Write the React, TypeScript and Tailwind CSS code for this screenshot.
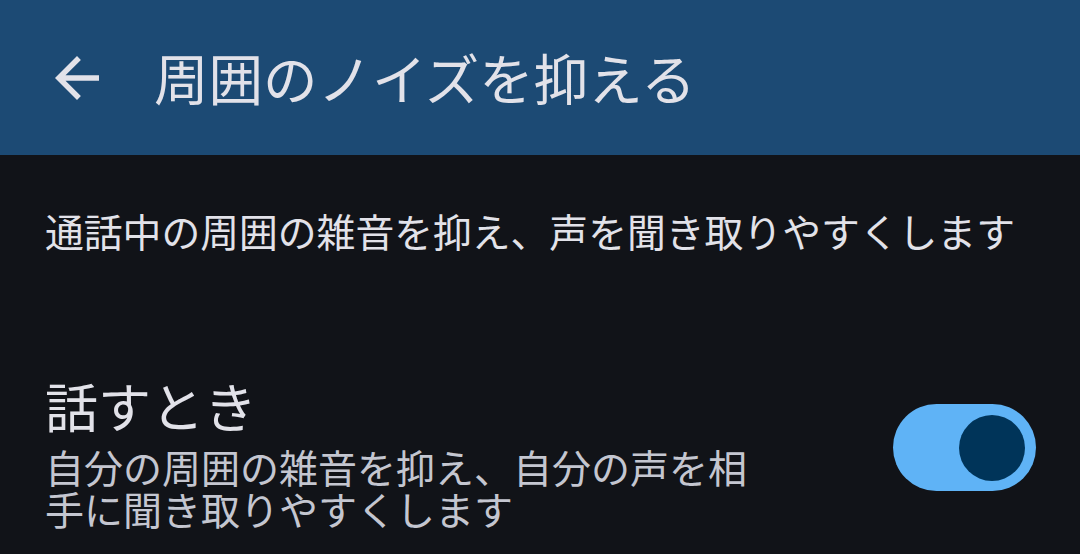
import React, { useState } from "react";

const ArrowBack = () => (
  <svg width="66" height="66" viewBox="0 0 24 24" fill="#e2e2e9">
    <path d="M20 11H7.83l5.59-5.59L12 4l-8 8 8 8 1.41-1.41L7.83 13H20v-2z" />
  </svg>
);

const Toggle = ({ on, onChange }: { on: boolean; onChange: () => void }) => (
  <button
    onClick={onChange}
    className={[
      "w-[143px] h-[87px] rounded-full flex items-center shrink-0 px-[11px] mt-[27px]",
      on ? "bg-[#5fb3f6] justify-end" : "bg-[#44474e] justify-start",
    ].join(" ")}
  >
    <span
      className={[
        "w-[66px] h-[66px] rounded-full block",
        on ? "bg-[#003459]" : "bg-[#8e9099]",
      ].join(" ")}
    />
  </button>
);

export default function App() {
  const [on, setOn] = useState(true);

  return (
    <div
      className="w-[1080px] h-[554px] bg-[#111318] text-[#e2e2e9] overflow-hidden"
      style={{ fontFamily: '"Noto Sans CJK JP", "Noto Sans", sans-serif' }}
    >
      <header className="h-[155px] bg-[#1c4a74] flex items-center pl-[44px]">
        <ArrowBack />
        <h1 className="ml-[44px] text-[54.5px] leading-none font-normal">
          周囲のノイズを抑える
        </h1>
      </header>

      <p className="pl-[45px] pt-[50px] text-[38.8px] leading-[50px] text-[#e2e2e9]">
        通話中の周囲の雑音を抑え、声を聞き取りやすくします
      </p>

      <div className="flex items-start justify-between pl-[45px] pr-[44px] mt-[122px]">
        <div className="flex flex-col">
          <span className="text-[53px] leading-[56px]">話すとき</span>
          <span className="text-[39px] leading-[42px] text-[#c4c6d0] w-[722px] mt-[12px]">
            自分の周囲の雑音を抑え、自分の声を相手に聞き取りやすくします
          </span>
        </div>
        <Toggle on={on} onChange={() => setOn(!on)} />
      </div>
    </div>
  );
}
